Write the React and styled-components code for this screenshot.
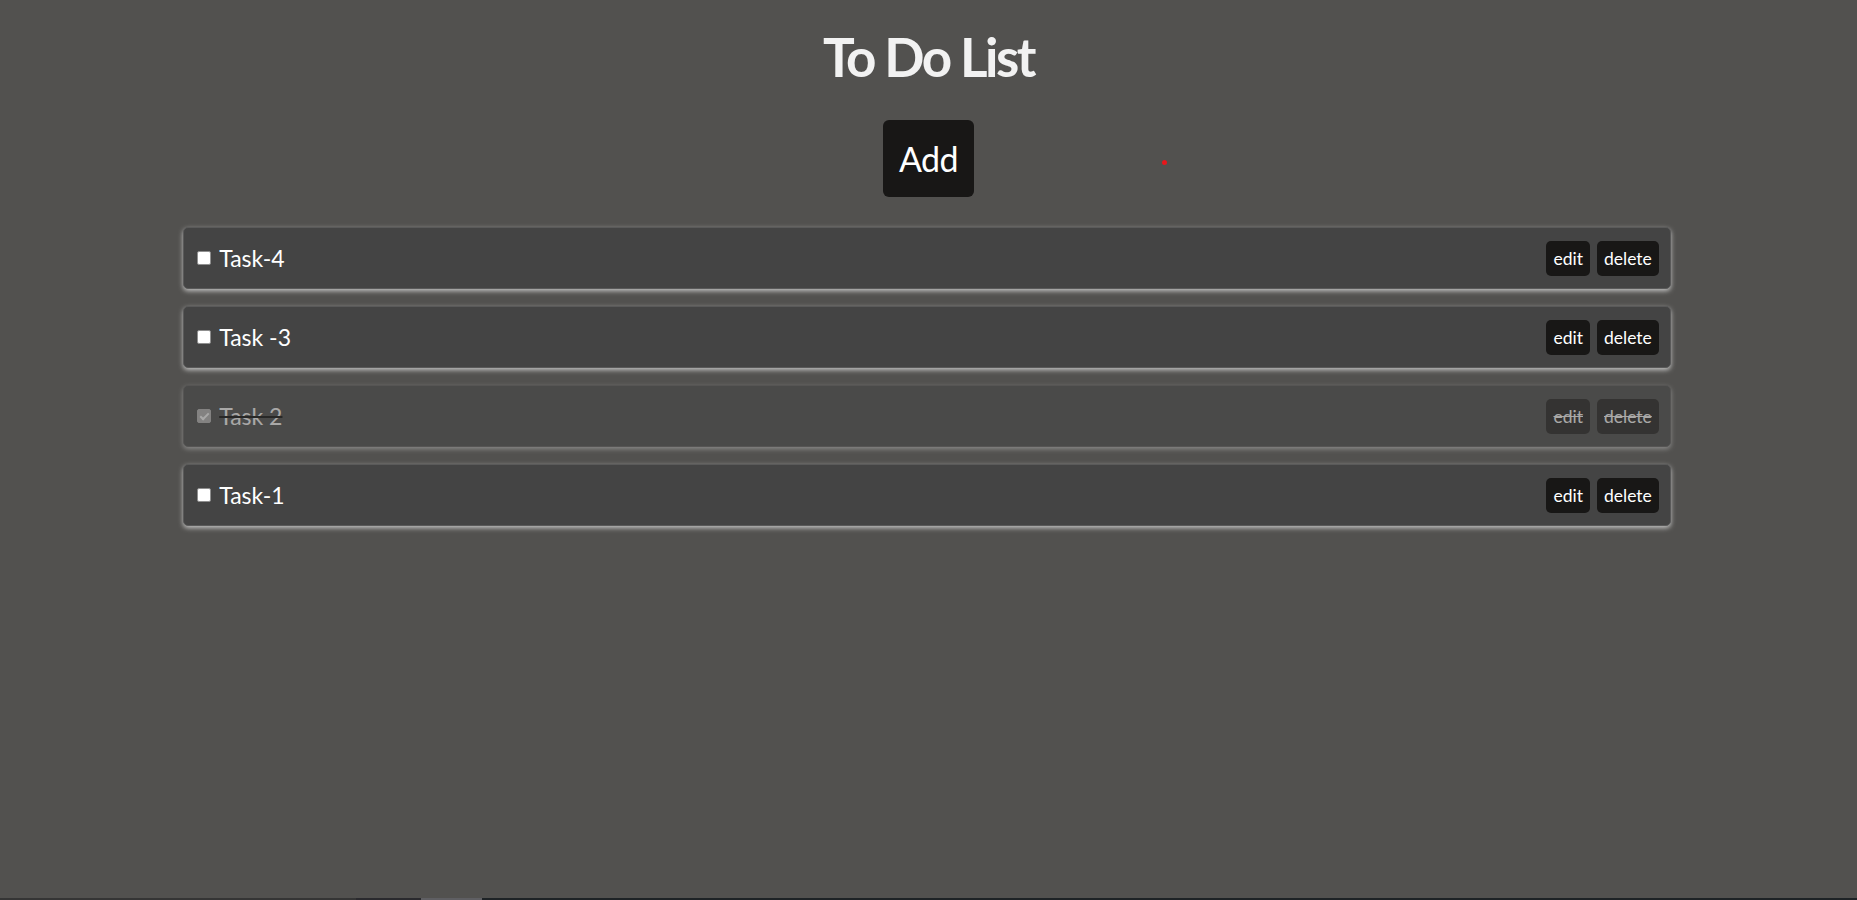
import React, { useState } from "react";
import styled, { createGlobalStyle } from "styled-components";

const GlobalStyle = createGlobalStyle`
  html, body {
    margin: 0;
    padding: 0;
    background: #52514f;
    font-family: Lato, "Open Sans", sans-serif;
    overflow: hidden;
  }
`;

const Page = styled.div`
  min-height: 900px;
  box-sizing: border-box;
  display: flex;
  flex-direction: column;
  align-items: center;
  padding-top: 24px;
  position: relative;
`;

const Title = styled.h1`
  margin: 0;
  font-size: 53px;
  line-height: 65px;
  font-weight: 700;
  letter-spacing: -2.5px;
  color: #f2f2f2;
`;

const AddButton = styled.button`
  margin-top: 31px;
  height: 77px;
  padding: 0 16px;
  background: #181716;
  color: #ffffff;
  border: none;
  border-radius: 6px;
  font-family: Lato, "Open Sans", sans-serif;
  font-size: 34px;
  letter-spacing: -0.5px;
  cursor: pointer;
`;

const List = styled.div`
  margin: 30px 3px 0 0;
  width: calc(80vw + 2px);
  display: flex;
  flex-direction: column;
  gap: 17px;
`;

const Row = styled.div`
  box-sizing: border-box;
  height: 62px;
  display: flex;
  align-items: center;
  justify-content: space-between;
  padding: 0 11px 0 9px;
  background: #444444;
  border: 1px solid #5a5a5a;
  border-radius: 5px;
  box-shadow: 0 2px 5px rgba(235, 235, 235, 0.75);
  opacity: ${(p) => (p.$done ? 0.5 : 1)};
`;

const Label = styled.label`
  display: flex;
  align-items: center;
  gap: 5px;
  color: #ffffff;
  font-size: 23px;
  text-decoration: ${(p) => (p.$done ? "line-through" : "none")};
  text-decoration-color: #000;
  text-decoration-thickness: 2px;
`;

const Check = styled.input`
  appearance: none;
  box-sizing: border-box;
  position: relative;
  width: 14px;
  height: 14px;
  margin: 3px 3px 3px 4px;
  border: 1px solid #8f8f8f;
  border-radius: 2px;
  background: #ffffff;
  &:checked {
    background: #b4b4b4;
    border-color: #b4b4b4;
  }
  &:checked::after {
    content: "";
    position: absolute;
    left: 3.5px;
    top: 0.5px;
    width: 3px;
    height: 7px;
    border: solid #ffffff;
    border-width: 0 2px 2px 0;
    transform: rotate(45deg);
  }
`;

const Actions = styled.div`
  display: flex;
  gap: 7px;
`;

const SmallButton = styled.button`
  height: 35px;
  padding: 0 7px;
  background: #181716;
  color: #ffffff;
  border: none;
  border-radius: 5px;
  font-family: Lato, "Open Sans", sans-serif;
  font-size: 17.5px;
  text-decoration: ${(p) => (p.$done ? "line-through" : "none")};
  cursor: pointer;
`;

const Dot = styled.span`
  position: absolute;
  left: 1162px;
  top: 160px;
  width: 5px;
  height: 5px;
  border-radius: 50%;
  background: #e8161b;
`;

const BottomStrip = styled.div`
  position: fixed;
  left: 0;
  right: 0;
  bottom: 0;
  height: 2px;
  display: flex;
`;

const StripPart = styled.div`
  width: ${(p) => p.$w};
  flex: ${(p) => (p.$grow ? 1 : "none")};
  background: ${(p) => p.$c};
`;

const initial = [
  { id: 4, text: "Task-4", done: false },
  { id: 3, text: "Task -3", done: false },
  { id: 2, text: "Task 2", done: true },
  { id: 1, text: "Task-1", done: false },
];

export default function App() {
  const [tasks, setTasks] = useState(initial);
  const toggle = (id) =>
    setTasks((t) => t.map((x) => (x.id === id ? { ...x, done: !x.done } : x)));
  return (
    <>
      <GlobalStyle />
      <Page>
        <Title>To Do List</Title>
        <AddButton>Add</AddButton>
        <List>
          {tasks.map((t) => (
            <Row key={t.id} $done={t.done}>
              <Label $done={t.done}>
                <Check type="checkbox" checked={t.done} onChange={() => toggle(t.id)} />
                {t.text}
              </Label>
              <Actions>
                <SmallButton $done={t.done}>edit</SmallButton>
                <SmallButton $done={t.done}>delete</SmallButton>
              </Actions>
            </Row>
          ))}
        </List>
        <Dot />
      </Page>
      <BottomStrip>
        <StripPart $w="356px" $c="#353535" />
        <StripPart $w="65px" $c="#2a2a2e" />
        <StripPart $w="61px" $c="#5f5f63" />
        <StripPart $grow $c="#1e2326" />
      </BottomStrip>
    </>
  );
}
